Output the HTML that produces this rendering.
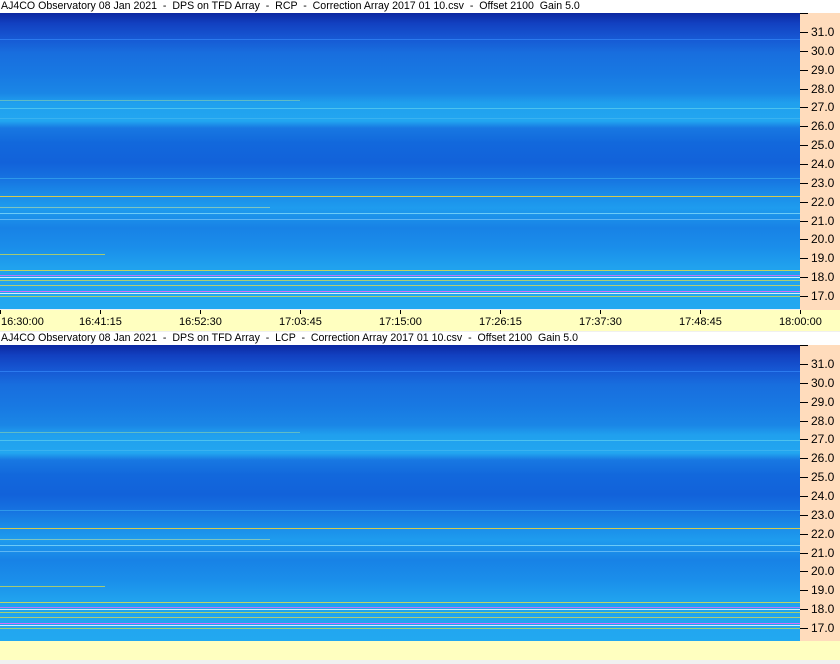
<!DOCTYPE html>
<html><head><style>
body{margin:0;width:840px;height:664px;background:#f0f0f0;position:relative;overflow:hidden;font-family:"Liberation Sans",sans-serif;font-size:12px;color:#000}
.t{position:absolute;left:0;width:840px;height:13px;background:#fff;line-height:13px;white-space:pre;padding-left:1px;font-size:10.6px}
.sp{position:absolute;left:0;width:800px;height:296px;
background:linear-gradient(to bottom,#0c28a0 0px,#1240c0 10px,#1656d2 24px,#186ede 40px,#1878e2 60px,#1a86e6 80px,#20a0ee 90px,#22a6f0 108px,#1878e2 115px,#1268dc 130px,#1262da 150px,#1672e0 165px,#1a8ae8 180px,#1e9cee 195px,#1882e6 215px,#1a8eea 235px,#20a2ee 255px,#22a8f0 296px)}
.ax{position:absolute;left:800px;width:40px;background:#ffdcbc}
.ln{position:absolute;left:0;height:1px}
.tk{position:absolute;left:800px;width:8px;height:1px;background:#000}
.lb{position:absolute;left:811px;font-size:12px;line-height:12px}
.yb{position:absolute;left:0;width:840px;background:#ffffc0}
.tl{position:absolute;top:316px;font-size:11px}
.vt{position:absolute;top:310px;width:1px;height:4px;background:#000}
</style></head><body>
<div class="t" style="top:0">AJ4CO Observatory 08 Jan 2021  -  DPS on TFD Array  -  RCP  -  Correction Array 2017 01 10.csv  -  Offset 2100  Gain 5.0</div>
<div class="sp" style="top:13px"></div>
<div class="ax" style="top:13px;height:297px"></div>
<div class="yb" style="top:310px;height:21px"></div>
<div class="t" style="top:332px">AJ4CO Observatory 08 Jan 2021  -  DPS on TFD Array  -  LCP  -  Correction Array 2017 01 10.csv  -  Offset 2100  Gain 5.0</div>
<div class="sp" style="top:345px"></div>
<div class="ax" style="top:345px;height:296px"></div>
<div class="yb" style="top:641px;height:19px"></div>

<div id="lines"></div>
<script>
var h='';
function L(top,col,op,l,w){h+='<div class="ln" style="top:'+top+'px;left:'+(l||0)+'px;width:'+(w||800)+'px;background:'+col+';opacity:'+op+'"></div>';}
[0,332].forEach(function(o){
L(o+39,'#3a90ff',.6);L(o+100,'#a0e0a0',.5,0,300);L(o+108,'#60d0f0',.7);L(o+118,'#50c0f0',.5);
L(o+178,'#40b0f0',.6);L(o+196,'#e8d040',.9,0,800);L(o+207,'#c0e0a0',.6,0,270);L(o+213,'#a0f0ff',.6,0,800);
L(o+219,'#a0e0ff',.5);L(o+254,'#e0e040',.7,0,105);
L(o+270,'#e8e040',.8);L(o+275,'#ff60ff',.7);L(o+277,'#ffffff',.8);L(o+280,'#e0e040',.7);
L(o+285,'#f0e040',.7);L(o+291,'#ff60ff',.8);L(o+293,'#ffffff',.8);L(o+296,'#e0e040',.7);
var v=[31,30,29,28,27,26,25,24,23,22,21,20,19,18,17];
v.forEach(function(n,i){var y=o+32+i*18.86;var y2=Math.round(y);
h+='<div class="tk" style="top:'+y2+'px"></div><div class="lb" style="top:'+(y2-6)+'px">'+n+'.0</div>';});
h+='<div class="tk" style="top:'+(o+13)+'px;width:8px"></div>';
});
var tl=['16:30:00','16:41:15','16:52:30','17:03:45','17:15:00','17:26:15','17:37:30','17:48:45','18:00:00'];
tl.forEach(function(s,i){var x=i*100;h+='<div class="vt" style="left:'+x+'px"></div><div class="tl" style="left:'+(i==0?1:x-21)+'px">'+s+'</div>';});
document.getElementById('lines').innerHTML=h;
</script>
</body></html>
